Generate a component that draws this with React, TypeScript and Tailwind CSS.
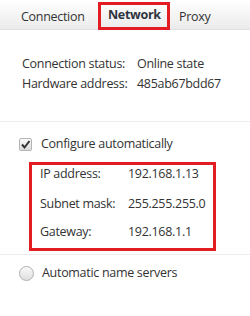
import React from "react";

export default function App() {
  const font = { fontFamily: '"Open Sans", "Noto Sans", sans-serif' };
  return (
    <div className="w-[250px] h-[316px] bg-white text-[#333333] text-[12.5px] tracking-[-0.3px] overflow-hidden" style={font}>
      <div className="h-[30px] bg-gradient-to-b from-white to-[#ebebeb] border-b border-[#e0e0e0] flex items-start pl-[21px]">
        <div className="w-[77px] h-[29px] flex items-center pt-[5px]">Connection</div>
        <div className="w-[72px] h-[28px] mt-[2px] border-[3px] border-[#e31b23] flex items-center pl-[7px] pb-[1px] font-bold text-[#2e3440]">Network</div>
        <div className="h-[29px] flex items-center pt-[5px] pl-[9px]">Proxy</div>
      </div>
      <div className="pl-[22px] pt-[25px] h-[92px] border-b border-[#ececec] flex flex-col gap-[2px]">
        <div className="flex h-[18px] items-center"><span className="w-[115px]">Connection status:</span><span>Online state</span></div>
        <div className="flex h-[18px] items-center"><span className="w-[115px]">Hardware address:</span><span>485ab67bdd67</span></div>
      </div>
      <div className="pt-[16px] h-[133px] border-b border-[#ececec]">
        <div className="flex items-center pl-[19px] h-[13px]">
          <div className="w-[13px] h-[13px] rounded-[2px] border border-[#b5b5b5] bg-gradient-to-b from-[#fafafa] to-[#dcdcdc] flex items-center justify-center">
            <svg width="11" height="11" viewBox="0 0 11 11"><path d="M2 5.5 L4.5 8.5 L9.5 2" stroke="#333" strokeWidth="2" fill="none" /></svg>
          </div>
          <span className="ml-[9px]">Configure automatically</span>
        </div>
        <div className="ml-[29px] mt-[11px] w-[187px] h-[89px] border-[3px] border-[#e31b23] pl-[8px] flex flex-col">
          <div className="flex h-[18px] items-center"><span className="w-[88px]">IP address:</span><span>192.168.1.13</span></div>
          <div className="flex h-[18px] items-center mt-[12px]"><span className="w-[88px]">Subnet mask:</span><span>255.255.255.0</span></div>
          <div className="flex h-[18px] items-center mt-[10px]"><span className="w-[88px]">Gateway:</span><span>192.168.1.1</span></div>
        </div>
      </div>
      <div className="flex items-center pl-[19px] pt-[9px]">
        <div className="w-[15px] h-[15px] rounded-full border border-[#b0b0b0] bg-gradient-to-b from-[#fafafa] to-[#dedede]" />
        <span className="ml-[8px]">Automatic name servers</span>
      </div>
    </div>
  );
}
